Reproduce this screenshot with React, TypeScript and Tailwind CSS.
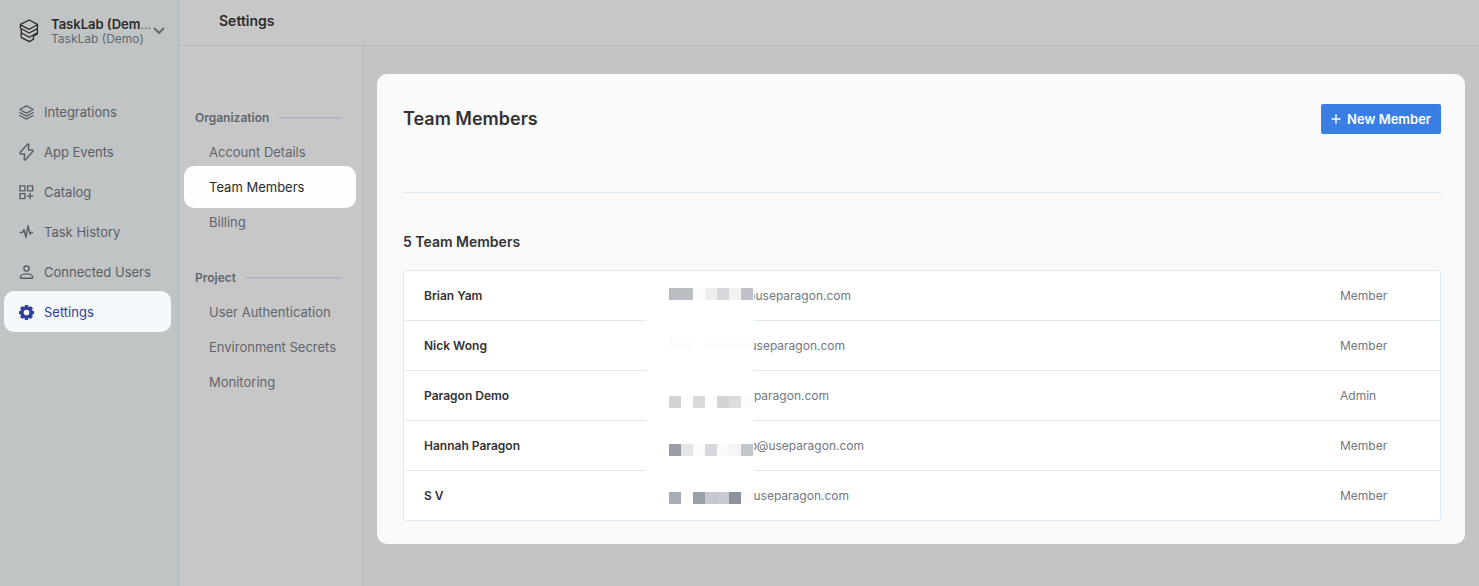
import { useState } from "react";
import type { ReactNode } from "react";

function LogoIcon() {
  return (
    <svg viewBox="0 0 20 24" className="h-6 w-5 shrink-0" fill="none" stroke="#2b2b2b" strokeWidth="1.3" strokeLinejoin="round" strokeLinecap="round" aria-hidden="true">
      <path d="M10.2 1 18.4 5.4V15L14.4 17.2V20.4L10.2 22.6 2.2 18.4V14.4M1.4 5.4 10.2 1M1.4 5.4V9.2L10.2 14 18.4 9.6M1.4 5.8 10.2 10.3 18.4 5.8M2.2 9.8V13.8L10.2 18.2 18.4 13.8" />
    </svg>
  );
}

function LayersIcon() {
  return (
    <svg viewBox="0 0 16 16" className="size-[15px]" fill="none" stroke="currentColor" strokeWidth="1.4" strokeLinejoin="round" strokeLinecap="round" aria-hidden="true">
      <path d="M8 1 15.2 4.8 8 8.6 .8 4.8Z" />
      <path d="M.8 8 8 11.8 15.2 8M.8 11.2 8 15 15.2 11.2" />
    </svg>
  );
}

function BoltIcon() {
  return (
    <svg viewBox="0 0 15 18" className="h-[18px] w-[15px]" fill="none" stroke="currentColor" strokeWidth="1.5" strokeLinejoin="round" aria-hidden="true">
      <path d="M8.8 1 1.2 9.2Q.6 10.8 2 11H5.6L5.2 16.2Q5.6 17.4 6.6 16.8L13.8 8.6Q14.4 7.2 13 7H9.4L9.8 1.8Q9.6 .6 8.8 1Z" />
    </svg>
  );
}

function CatalogIcon() {
  return (
    <svg viewBox="0 0 15 15" className="size-[15px]" fill="none" stroke="currentColor" strokeWidth="1.4" aria-hidden="true">
      <path d="M.9 .9H5.9V5.9H.9ZM8.6 .9H13.6V5.9H8.6ZM.9 8.6H5.9V13.6H.9ZM11.1 8V14.2M8 11.1H14.2" />
    </svg>
  );
}

function PulseIcon() {
  return (
    <svg viewBox="0 0 15 16" className="h-4 w-[15px]" fill="none" stroke="currentColor" strokeWidth="1.5" strokeLinejoin="round" strokeLinecap="round" aria-hidden="true">
      <path d="M1.2 8.4H3.6L5 5.6L7 13.2L9 1.8L11 10.2L11.8 8.4H13.4" />
    </svg>
  );
}

function UserIcon() {
  return (
    <svg viewBox="0 0 15 16" className="h-4 w-[15px]" fill="none" stroke="currentColor" strokeWidth="1.4" strokeLinejoin="round" aria-hidden="true">
      <circle cx="7.5" cy="4.6" r="2.6" />
      <path d="M1.5 14.3V13C1.5 11 4.7 9.9 7.5 9.9S13.5 11 13.5 13V14.3Z" />
    </svg>
  );
}

function GearIcon() {
  return (
    <svg viewBox="0 0 16 16" className="size-[15px]" aria-hidden="true">
      <g fill="currentColor">
        <rect x="6" y="0" width="4" height="16" rx="1" />
        <rect x="6" y="0" width="4" height="16" rx="1" transform="rotate(45 8 8)" />
        <rect x="6" y="0" width="4" height="16" rx="1" transform="rotate(90 8 8)" />
        <rect x="6" y="0" width="4" height="16" rx="1" transform="rotate(135 8 8)" />
        <circle cx="8" cy="8" r="6.4" />
      </g>
      <circle cx="8" cy="8" r="3" fill="#f5f9fb" />
    </svg>
  );
}

const mainNav: { label: string; icon: ReactNode }[] = [
  { label: "Integrations", icon: <LayersIcon /> },
  { label: "App Events", icon: <BoltIcon /> },
  { label: "Catalog", icon: <CatalogIcon /> },
  { label: "Task History", icon: <PulseIcon /> },
  { label: "Connected Users", icon: <UserIcon /> },
  { label: "Settings", icon: <GearIcon /> },
];

const settingsGroups = [
  { title: "Organization", items: ["Account Details", "Team Members", "Billing"] },
  { title: "Project", items: ["User Authentication", "Environment Secrets", "Monitoring"] },
];

const members = [
  { name: "Brian Yam", email: "@useparagon.com", clip: "w-[97px]", role: "Member" },
  { name: "Nick Wong", email: "@useparagon.com", clip: "w-[91px]", role: "Member" },
  { name: "Paragon Demo", email: "@useparagon.com", clip: "w-[75px]", role: "Admin" },
  { name: "Hannah Paragon", email: "o@useparagon.com", clip: "w-[110px]", role: "Member" },
  { name: "S V", email: "@useparagon.com", clip: "w-[95px]", role: "Member" },
];

const mosaic = [
  { y: 17, cells: ["#b9bdc3", "#babec3", "#fcfcfd", "#eeeef0", "#d6d7db", "#f1f2f2", "#bec2c8"] },
  { y: 65, cells: ["#fdfdfd", "#fdfdfd", "#ffffff", "#fdfdfd", "#fdfdfd", "#fdfdfd", "#fdfdfd"] },
  { y: 125, cells: ["#d2d3d5", "#ffffff", "#d8d9da", "#fdfdfd", "#d3d4d6", "#dcddde", "#fcfcfc"] },
  { y: 173, cells: ["#999ea6", "#e4e5e7", "#fcfcfc", "#d7d8dd", "#fafafb", "#f5f5f5", "#c3c6cb"] },
  { y: 221, cells: ["#a8adb5", "#fdfdfd", "#9aa0a9", "#c5c8ce", "#c8cad0", "#8c929c", "#fbfbfb"] },
];

function Sidebar() {
  const [active, setActive] = useState("Settings");
  return (
    <aside className="flex w-[179px] shrink-0 flex-col border-r border-[#aebac3] bg-[#c0c4c5]">
      <button type="button" className="flex items-center pt-4 pl-[19px] text-left">
        <LogoIcon />
        <span className="ml-3 block w-[102px]">
          <span className="block truncate text-xs leading-4 text-[#62686f]">
            <span className="text-[13px] font-semibold text-[#2b2b2b]">TaskLab (Demo)</span>
          </span>
          <span className="block text-xs leading-3 whitespace-nowrap text-[#62686f]">TaskLab (Demo)</span>
        </span>
        <svg viewBox="0 0 12 8" className="h-2 w-3" fill="none" stroke="#62686f" strokeWidth="1.8" strokeLinecap="round" strokeLinejoin="round" aria-hidden="true">
          <path d="M1.5 1.5 6 6 10.5 1.5" />
        </svg>
      </button>
      <nav aria-label="Main" className="pt-[46px] pr-[7px] pl-1">
        <ul>
          {mainNav.map((item) => (
            <li key={item.label} className="flex h-10 items-center">
              <a
                href="#"
                onClick={() => setActive(item.label)}
                aria-current={active === item.label ? "page" : undefined}
                className={
                  active === item.label
                    ? "flex h-[41px] w-full shrink-0 items-center rounded-[10px] bg-[#f5f9fb] pt-0.5 pl-[15px] text-[13px] text-[#2f3f9b]"
                    : "flex h-[41px] w-full shrink-0 items-center rounded-[10px] pt-0.5 pl-[15px] text-[13px] text-[#5a6067]"
                }
              >
                {item.icon}
                <span className="ml-2.5">{item.label}</span>
              </a>
            </li>
          ))}
        </ul>
      </nav>
    </aside>
  );
}

function SettingsNav() {
  const [active, setActive] = useState("Team Members");
  return (
    <nav aria-label="Settings" className="flex w-[184px] shrink-0 flex-col gap-[29px] border-r border-[#b7bbbc] bg-[#c7c7c7] pt-[62px]">
      {settingsGroups.map((group) => (
        <section key={group.title}>
          <div className="mr-5 ml-4 flex h-5 items-center gap-[10px]">
            <h2 className="text-xs font-semibold text-[#5f666e]">{group.title}</h2>
            <span className="h-0.5 flex-1 bg-[#b2b7c8]" />
          </div>
          <ul className="mt-1.5 mr-1.5 ml-[5px]">
            {group.items.map((item) => (
              <li key={item} className="flex h-[35px] items-center">
                <a
                  href="#"
                  onClick={() => setActive(item)}
                  aria-current={active === item ? "page" : undefined}
                  className={
                    active === item
                      ? "flex h-[42px] w-full shrink-0 items-center rounded-[10px] bg-[#fdfdfd] pl-[25px] text-[13px] text-[#2b2b2b]"
                      : "flex h-[42px] w-full shrink-0 items-center rounded-[10px] pl-[25px] text-[13px] text-[#5f666e]"
                  }
                >
                  {item}
                </a>
              </li>
            ))}
          </ul>
        </section>
      ))}
    </nav>
  );
}

function MembersTable() {
  return (
    <div className="relative mt-[18px] overflow-hidden rounded-[3px] border border-[#dfe9f5] bg-white">
      <table className="w-full table-fixed border-separate border-spacing-0 text-left text-xs" aria-label="Team members">
        <colgroup>
          <col className="w-[242px]" />
          <col />
          <col className="w-[100px]" />
        </colgroup>
        <tbody className="[&>tr:not(:last-child)>*]:border-b [&>tr:not(:last-child)>*]:border-[#dfe9f5]">
          {members.map((member) => (
            <tr key={member.name} className="h-[50px] last:h-[49px]">
              <th scope="row" className="pl-5 font-semibold text-[#333333]">{member.name}</th>
              <td className="pl-[108px] text-[#707780]">
                <span className={`flex justify-end ${member.clip}`}>{member.email}</span>
              </td>
              <td className="text-[#707780]">{member.role}</td>
            </tr>
          ))}
        </tbody>
      </table>
      <svg viewBox="0 0 108 249" className="absolute top-0 left-[242px] h-[249px] w-[108px]" shapeRendering="crispEdges" aria-hidden="true">
        <rect width="108" height="249" fill="#ffffff" />
        {mosaic.map((row) =>
          row.cells.map((color, i) => (
            <rect key={`${row.y}-${i}`} x={23 + i * 12} y={row.y} width="12" height="12" fill={color} />
          )),
        )}
      </svg>
    </div>
  );
}

export default function App() {
  return (
    <div className="flex min-h-screen bg-[#c4c4c4] font-['Inter',sans-serif] leading-5">
      <Sidebar />
      <div className="flex min-w-0 flex-1 flex-col">
        <header className="flex h-[46px] items-center border-b border-[#b7b9ba] bg-[#c7c7c7] pb-1 pl-10">
          <h1 className="text-sm font-semibold text-[#2b2b2b]">Settings</h1>
        </header>
        <div className="flex flex-1">
          <SettingsNav />
          <main className="min-w-0 flex-1 px-3.5 py-7">
            <div className="rounded-[10px] bg-[#fafafa] pt-[30px] pr-6 pb-[23px] pl-[26px]">
              <div className="flex items-center justify-between border-b border-[#dfe8ef] pb-[58px]">
                <h2 className="text-lg font-semibold text-[#333333]">Team Members</h2>
                <button type="button" className="flex h-[30px] items-center gap-1.5 rounded-[2px] bg-[#397ee3] px-2.5 text-[13px] font-semibold text-white">
                  <svg viewBox="0 0 10 10" className="size-2.5" stroke="currentColor" strokeWidth="1.5" aria-hidden="true">
                    <path d="M5 .5V9.5M.5 5H9.5" />
                  </svg>
                  New Member
                </button>
              </div>
              <h3 className="mt-[39px] text-sm font-semibold text-[#333333]">5 Team Members</h3>
              <MembersTable />
            </div>
          </main>
        </div>
      </div>
    </div>
  );
}
